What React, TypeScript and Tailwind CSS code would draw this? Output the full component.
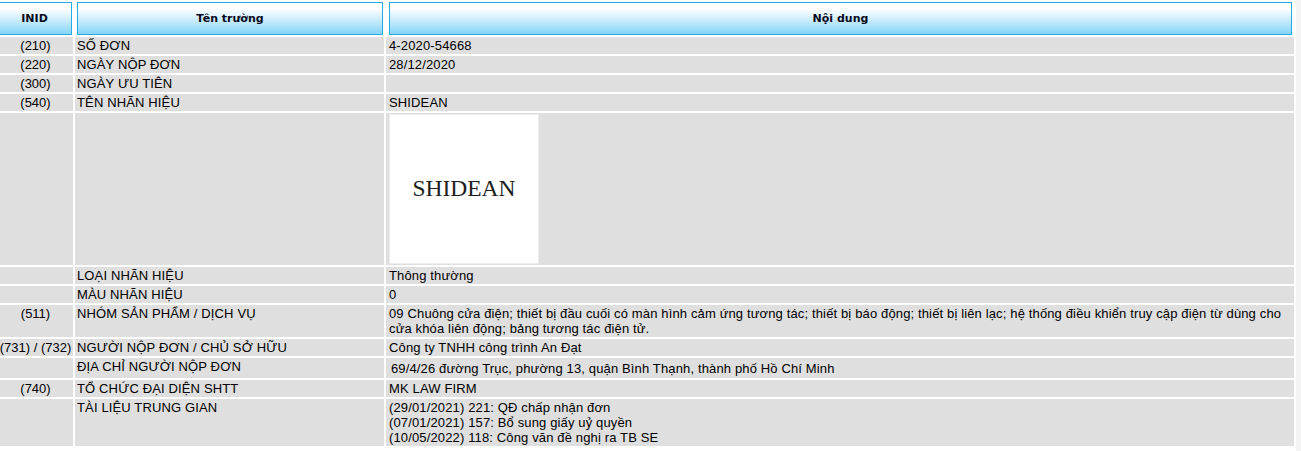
import React from "react";

type Row = {
  inid?: string;
  name: string;
  content?: React.ReactNode;
  kind?: "image" | "addr";
};

const rows: Row[] = [
  { inid: "(210)", name: "SỐ ĐƠN", content: "4-2020-54668" },
  { inid: "(220)", name: "NGÀY NỘP ĐƠN", content: "28/12/2020" },
  { inid: "(300)", name: "NGÀY ƯU TIÊN", content: "" },
  { inid: "(540)", name: "TÊN NHÃN HIỆU", content: "SHIDEAN" },
  { name: "", kind: "image" },
  { name: "LOẠI NHÃN HIỆU", content: "Thông thường" },
  { name: "MÀU NHÃN HIỆU", content: "0" },
  {
    inid: "(511)",
    name: "NHÓM SẢN PHẨM / DỊCH VỤ",
    content: (
      <>
        09 Chuông cửa điện; thiết bị đầu cuối có màn hình cảm ứng tương tác; thiết bị báo động; thiết bị liên lạc; hệ thống điều khiển truy cập điện từ dùng cho
        <br />
        cửa khóa liên động; bảng tương tác điện tử.
      </>
    ),
  },
  { inid: "(731) / (732)", name: "NGƯỜI NỘP ĐƠN / CHỦ SỞ HỮU", content: "Công ty TNHH công trình An Đạt" },
  {
    name: "ĐỊA CHỈ NGƯỜI NỘP ĐƠN",
    content: "69/4/26 đường Trục, phường 13, quận Bình Thạnh, thành phố Hồ Chí Minh",
    kind: "addr",
  },
  { inid: "(740)", name: "TỔ CHỨC ĐẠI DIỆN SHTT", content: "MK LAW FIRM" },
  {
    name: "TÀI LIỆU TRUNG GIAN",
    content: (
      <>
        (29/01/2021) 221: QĐ chấp nhận đơn
        <br />
        (07/01/2021) 157: Bổ sung giấy uỷ quyền
        <br />
        (10/05/2022) 118: Công văn đề nghị ra TB SE
      </>
    ),
  },
];

const headerBox =
  "h-[33px] flex items-center justify-center border border-[#22ace4] bg-[linear-gradient(to_bottom,#ffffff_0%,#ffffff_18%,#c9ecfc_55%,#86d4f8_100%)] text-[11px] font-bold tracking-normal text-[#0a0a1e] [font-family:'DejaVu_Sans',Verdana,sans-serif]";

export default function App() {
  return (
    <div className="w-[1301px] h-[451px] bg-white overflow-hidden flex">
      <div className="flex-1 overflow-hidden">
        <div className="ml-[-3px] mt-[2px] w-[1297px] grid grid-cols-[76px_309px_908px] gap-x-[2px] gap-y-[2px] text-[13px] leading-[15px] tracking-[0.14px] text-black [font-family:'Liberation_Sans',Arial,sans-serif]">
          <div className={headerBox + " mr-[1px]"}>INID</div>
          <div className={headerBox + " ml-[2px] mr-[1px]"}>Tên trường</div>
          <div className={headerBox + " ml-[3px] mr-[2px]"}>Nội dung</div>

          {rows.map((r, i) => (
            <React.Fragment key={i}>
              <div className="bg-[#dfdfdf] py-[1px] pl-[1px] text-center whitespace-nowrap tracking-normal">{r.inid ?? ""}</div>
              <div className="bg-[#dfdfdf] py-[1px] pl-[2px] whitespace-nowrap">{r.name}</div>
              {r.kind === "image" ? (
                <div className="bg-[#dfdfdf] pt-[1px] pb-[1px] pl-[3px]">
                  <div className="w-[150px] h-[150px] bg-white border border-[#ececec] flex items-center justify-center">
                    <span className="text-[23.5px] leading-none tracking-normal text-[#1e1e1e] [font-family:'Liberation_Serif','Times_New_Roman',serif]">
                      SHIDEAN
                    </span>
                  </div>
                </div>
              ) : r.kind === "addr" ? (
                <div className="bg-[#dfdfdf] pt-[3px] pb-[2px] pl-[5px] whitespace-nowrap">{r.content}</div>
              ) : (
                <div className="bg-[#dfdfdf] py-[1px] pl-[3px] whitespace-nowrap min-h-[17px]">{r.content}</div>
              )}
            </React.Fragment>
          ))}
        </div>
      </div>
      <div className="w-[5px] shrink-0 ml-[1px] bg-[#f4f4f4]" />
    </div>
  );
}
